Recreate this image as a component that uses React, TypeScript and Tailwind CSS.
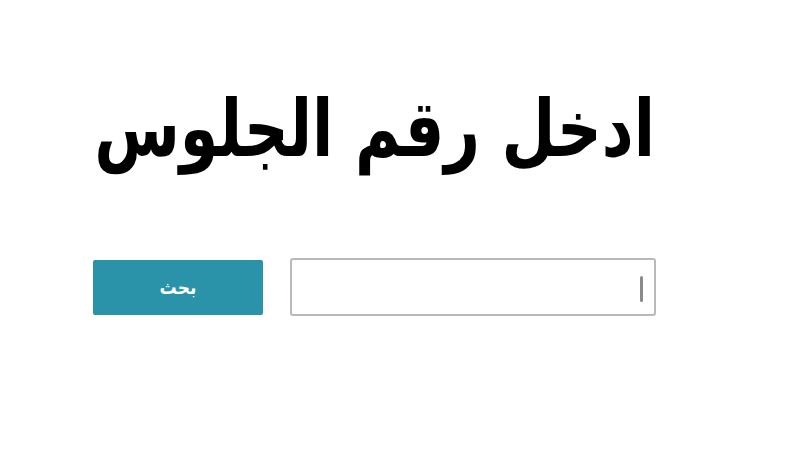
import React from "react";

export default function App() {
  return (
    <div className="w-[800px] h-[450px] bg-white overflow-hidden" dir="rtl" style={{ fontFamily: '"DejaVu Sans Condensed", "DejaVu Sans", sans-serif' }}>
      <div className="w-[563px] mr-[144px] pt-[78px] flex flex-col items-center">
        <h1 className="text-[69px] leading-[100px] font-bold text-black whitespace-nowrap scale-y-[1.15] origin-center">ادخل رقم الجلوس</h1>
        <div className="mt-[80px] flex w-full items-center gap-[27px]">
          <div className="relative flex-1 h-[58px] border-2 border-[#b9b9b9] rounded-[3px] bg-white">
            <div className="absolute right-[11px] top-[16px] w-[3px] h-[26px] bg-[#8a8a8a] rounded" />
          </div>
          <button className="w-[170px] h-[55px] bg-[#2a93aa] text-white text-[19px] font-bold rounded-[2px]">بحث</button>
        </div>
      </div>
    </div>
  );
}
